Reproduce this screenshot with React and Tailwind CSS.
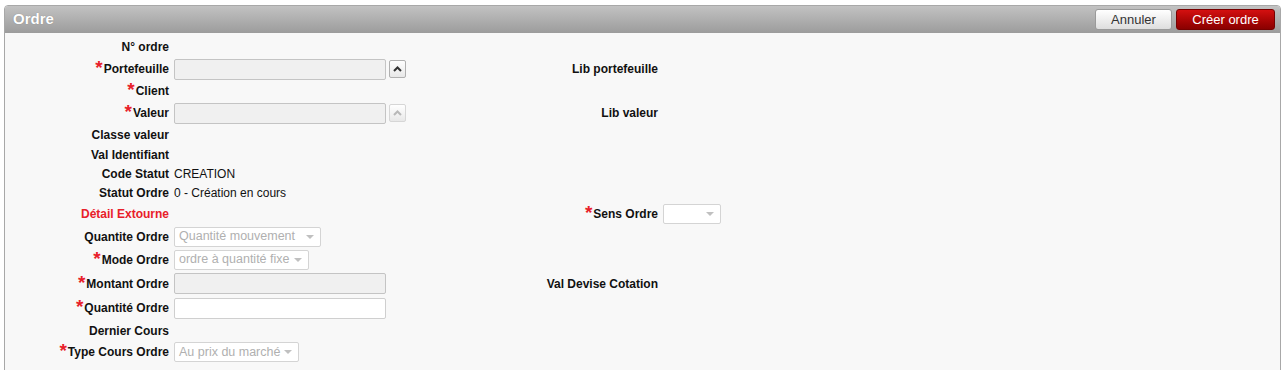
import React from "react";

const Star = () => (
  <span className="text-[#e8202a] font-bold text-[19px] leading-[0] relative top-[1px] mr-[1px]">*</span>
);

const UpBtn = ({ disabled }) => (
  <div
    className={`ml-[3px] w-[17px] h-[18px] border rounded-[2px] flex items-center justify-center bg-gradient-to-b from-white to-[#e8e8e8] ${
      disabled ? "border-[#d6d6d6]" : "border-[#b0b0b0]"
    }`}
  >
    <svg width="9" height="6" viewBox="0 0 9 6">
      <path d="M1 5 L4.5 1.5 L8 5" fill="none" stroke={disabled ? "#b8b8b8" : "#333"} strokeWidth="2" />
    </svg>
  </div>
);

const Input = ({ white }) => (
  <div
    className={`w-[212px] h-[21px] border rounded-[2px] ${
      white ? "bg-white border-[#cfcfcf]" : "bg-[#f0f0f0] border-[#c4c4c4]"
    }`}
  />
);

const Select = ({ text, w }) => (
  <div
    className="h-[20px] border border-[#d4d4d4] rounded-[2px] bg-white flex items-center justify-between pl-[4px] pr-[6px] text-[12.5px] text-[#b0b0b0] whitespace-nowrap overflow-hidden"
    style={{ width: w }}
  >
    <span>{text}</span>
    <svg width="8" height="4" viewBox="0 0 8 4" className="shrink-0">
      <path d="M0 0 L8 0 L4 4 Z" fill="#c0c0c0" />
    </svg>
  </div>
);

const Row = ({ h, label, req, red, value, rlabel, rreq, rvalue }) => (
  <div className="flex items-center" style={{ height: h }}>
    <div className={`w-[164px] text-right font-bold text-[12px] whitespace-nowrap ${red ? "text-[#e8202a]" : "text-[#111]"}`}>
      {req && <Star />}
      {label}
    </div>
    <div className="ml-[5px] w-[235px] flex items-center text-[12px] text-[#111] whitespace-nowrap">{value}</div>
    <div className="w-[249px] text-right font-bold text-[12px] text-[#111] whitespace-nowrap">
      {rreq && <Star />}
      {rlabel}
    </div>
    <div className="ml-[5px] flex items-center">{rvalue}</div>
  </div>
);

export default function App() {
  return (
    <div className="w-[1285px] h-[370px] bg-white pt-[5px] pl-[4px] pr-[4px] overflow-hidden" style={{ fontFamily: '"Liberation Sans", Arial, sans-serif' }}>
      <div className="border border-[#a8a8a8] rounded-t-[4px] bg-[#f8f8f8] h-[380px]">
        <div className="h-[27px] rounded-t-[3px] bg-gradient-to-b from-[#c2c2c2] to-[#9c9c9c] flex items-center justify-between pl-[8px] pr-[5px]">
          <span className="text-white font-bold text-[15px] [text-shadow:0_0_1px_rgba(0,0,0,0.3)]">Ordre</span>
          <div className="flex items-center gap-[4px]">
            <button className="w-[77px] h-[21px] rounded-[3px] border border-[#9a9a9a] bg-gradient-to-b from-white to-[#dedede] text-[13px] text-[#333] leading-none">
              Annuler
            </button>
            <button className="w-[99px] h-[21px] rounded-[3px] border border-[#700] bg-gradient-to-b from-[#d41010] to-[#8a0000] text-[13px] text-white leading-none">
              Créer ordre
            </button>
          </div>
        </div>
        <div className="pt-[3px]">
          <Row h={22} label="N° ordre" />
          <Row h={22} label="Portefeuille" req value={<><Input /><UpBtn /></>} rlabel="Lib portefeuille" />
          <Row h={22} label="Client" req />
          <Row h={22} label="Valeur" req value={<><Input /><UpBtn disabled /></>} rlabel="Lib valeur" />
          <Row h={21} label="Classe valeur" />
          <Row h={19} label="Val Identifiant" />
          <Row h={19} label="Code Statut" value="CREATION" />
          <Row h={19} label="Statut Ordre" value="0 - Création en cours" />
          <Row h={23} label="Détail Extourne" red rlabel="Sens Ordre" rreq rvalue={<Select text="" w={58} />} />
          <Row h={23} label="Quantite Ordre" value={<Select text="Quantité mouvement" w={147} />} />
          <Row h={23} label="Mode Ordre" req value={<Select text="ordre à quantité fixe" w={135} />} />
          <Row h={25} label="Montant Ordre" req value={<Input />} rlabel="Val Devise Cotation" />
          <Row h={24} label="Quantité Ordre" req value={<Input white />} />
          <Row h={21} label="Dernier Cours" />
          <Row h={22} label="Type Cours Ordre" req value={<Select text="Au prix du marché" w={125} />} />
        </div>
      </div>
    </div>
  );
}
